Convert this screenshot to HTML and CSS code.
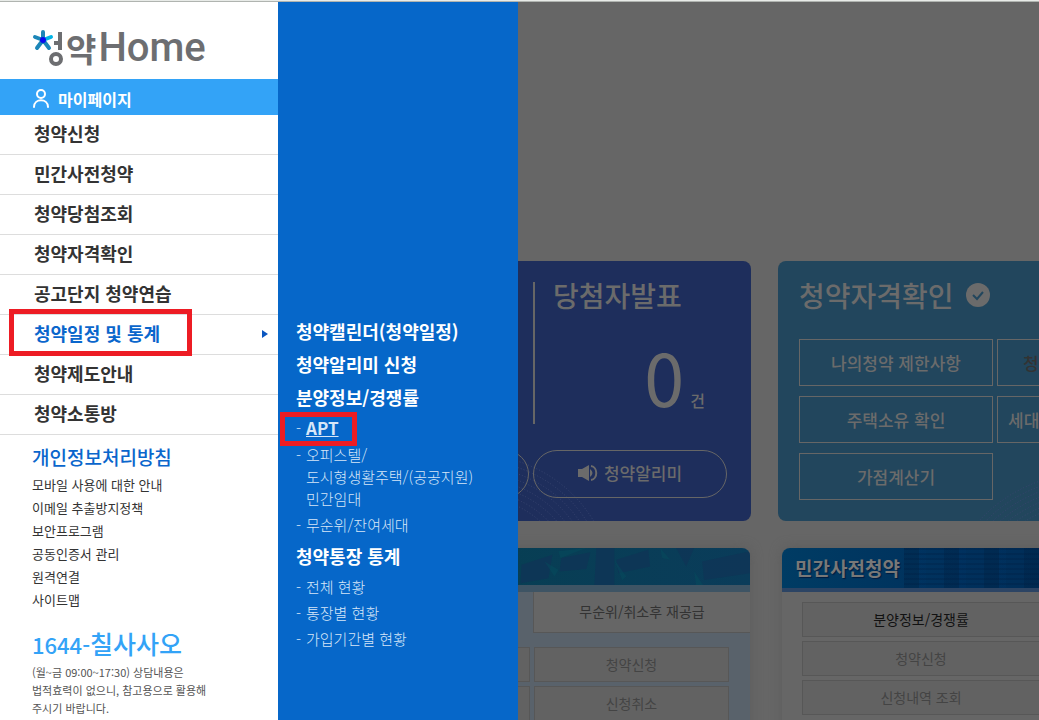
FILE: index.html
```html
<!DOCTYPE html>
<html lang="ko">
<head>
<meta charset="utf-8">
<title>청약Home</title>
<link rel="stylesheet" href="styles.css">
</head>
<body>
<div class="layout">
  <aside class="sidebar">
    <a class="logo" href="#" aria-label="청약Home">
      <svg class="logo-mark" viewBox="0 0 32 38" width="32" height="38" aria-hidden="true">
        <g class="mark-arms">
          <path d="M11 11V3M11 11L3 8M11 11L5 19M11 11L17 19"/>
          <path class="arm-light" d="M11 11L19 8"/>
        </g>
        <circle class="mark-core" cx="11" cy="11" r="3"/>
        <g class="mark-base"><path d="M28 3V21M22 14H28"/><circle cx="24" cy="30" r="5"/></g>
      </svg>
      <span class="logo-ko">약</span><span class="logo-en">Home</span>
    </a>
    <a class="mypage" href="#">
      <svg viewBox="0 0 18 20" width="18" height="20" aria-hidden="true"><circle cx="9" cy="6" r="4"/><path d="M2 19C2 10 16 10 16 19"/></svg>
      <span>마이페이지</span>
    </a>
    <nav>
      <ul class="menu">
        <li><a href="#">청약신청</a></li>
        <li><a href="#">민간사전청약</a></li>
        <li><a href="#">청약당첨조회</a></li>
        <li><a href="#">청약자격확인</a></li>
        <li><a href="#">공고단지 청약연습</a></li>
        <li class="active"><a href="#">청약일정 및 통계</a><span class="mark mark-menu"></span></li>
        <li><a href="#">청약제도안내</a></li>
        <li><a href="#">청약소통방</a></li>
      </ul>
    </nav>
    <div class="info">
      <h2><a href="#">개인정보처리방침</a></h2>
      <ul class="links">
        <li><a href="#">모바일 사용에 대한 안내</a></li>
        <li><a href="#">이메일 추출방지정책</a></li>
        <li><a href="#">보안프로그램</a></li>
        <li><a href="#">공동인증서 관리</a></li>
        <li><a href="#">원격연결</a></li>
        <li><a href="#">사이트맵</a></li>
      </ul>
      <p class="phone">1644-<strong>칠사사오</strong></p>
      <p class="notice">(월~금 09:00~17:30) 상담내용은<br>법적효력이 없으니, 참고용으로 활용해<br>주시기 바랍니다.</p>
    </div>
  </aside>

  <nav class="submenu">
    <h3><a href="#">청약캘린더(청약일정)</a></h3>
    <h3><a href="#">청약알리미 신청</a></h3>
    <h3><a href="#">분양정보/경쟁률</a></h3>
    <ul>
      <li class="current"><a href="#">APT</a><span class="mark mark-apt"></span></li>
      <li><a href="#">오피스텔/<br>도시형생활주택/(공공지원)<br>민간임대</a></li>
      <li><a href="#">무순위/잔여세대</a></li>
    </ul>
    <h3><a href="#">청약통장 통계</a></h3>
    <ul>
      <li><a href="#">전체 현황</a></li>
      <li><a href="#">통장별 현황</a></li>
      <li><a href="#">가입기간별 현황</a></li>
    </ul>
  </nav>

  <main class="page">
    <div class="row row-top">
      <section class="card card-navy">
        <svg class="waves" viewBox="0 0 434 260" aria-hidden="true">
          <circle cx="160" cy="330" r="136"/><circle cx="160" cy="330" r="130"/><circle cx="160" cy="330" r="124"/><circle cx="160" cy="330" r="118"/><circle cx="160" cy="330" r="112"/><circle cx="160" cy="330" r="106"/><circle cx="160" cy="330" r="100"/><circle cx="160" cy="330" r="94"/>
        </svg>
        <div class="result">
          <h2>당첨자발표</h2>
          <p class="count"><b>0</b><span>건</span></p>
        </div>
        <div class="pills">
          <button type="button" class="pill" aria-label="청약캘린더"></button>
          <button type="button" class="pill">
            <svg viewBox="0 0 20 16" width="20" height="16" aria-hidden="true"><path class="solid" d="M0 4H4L11 0V16L4 12H0Z"/><path class="solid" d="M12 4Q17 8 12 12Z"/><path class="wave" d="M13 1C20 2 20 14 13 15"/></svg>
            청약알리미
          </button>
        </div>
      </section>
      <section class="card card-teal">
        <svg class="waves" viewBox="0 0 434 260" aria-hidden="true">
          <circle cx="310" cy="360" r="148"/><circle cx="310" cy="360" r="143"/><circle cx="310" cy="360" r="138"/><circle cx="310" cy="360" r="133"/><circle cx="310" cy="360" r="128"/><circle cx="310" cy="360" r="123"/><circle cx="310" cy="360" r="118"/>
        </svg>
        <h2>청약자격확인
          <svg viewBox="0 0 24 24" width="24" height="24" aria-hidden="true"><circle cx="12" cy="12" r="12"/><path d="M7 12L11 16L17 9"/></svg>
        </h2>
        <div class="checks">
          <button type="button">나의청약 제한사항</button>
          <button type="button" class="dark">청약제한사항 확인</button>
          <button type="button">주택소유 확인</button>
          <button type="button" class="long">세대구성원 등록/조회</button>
          <button type="button">가점계산기</button>
        </div>
      </section>
    </div>

    <div class="row row-bottom">
      <section class="panel panel-apply">
        <header>
          <svg viewBox="0 0 434 44" preserveAspectRatio="none" aria-hidden="true">
            <path class="tower" d="M245 12L274 5L270 25L243 28ZM300 14L332 2L334 22L302 30ZM280 0H298V44H278ZM360 0H378L370 22ZM386 16L434 4V30L388 38ZM205 20L236 8L232 36L204 42Z"/>
            <path class="beam" d="M228 16L242 26L238 34ZM344 0L354 14L346 12ZM298 14L310 34L306 38ZM378 28L387 44H380ZM242 4L270 0L244 12Z"/>
          </svg>
        </header>
        <div class="tabs"><button type="button">무순위/취소후 재공급</button></div>
        <div class="cells">
          <button type="button" aria-label="분양정보"></button>
          <button type="button">청약신청</button>
          <button type="button" aria-label="청약조회"></button>
          <button type="button">신청취소</button>
        </div>
      </section>
      <section class="panel panel-private">
        <header>
          <div class="skyline"></div>
          <h2>민간사전청약</h2>
        </header>
        <div class="cells">
          <button type="button" class="strong">분양정보/경쟁률</button>
          <button type="button">청약신청</button>
          <button type="button">신청내역 조회</button>
        </div>
      </section>
    </div>
  </main>
</div>
</body>
</html>
```

FILE: styles.css
```css
* { box-sizing: border-box; }

body {
  margin: 0;
  font-family: "Noto Sans CJK KR", sans-serif;
  color: #333;
  background: #e8ebe8;
}

h2, h3, p, ul { margin: 0; padding: 0; }
ul { list-style: none; }
a { color: inherit; text-decoration: none; }
button { font-family: inherit; margin: 0; padding: 0; white-space: nowrap; }

.layout {
  display: grid;
  grid-template-columns: 278px 240px minmax(0, 1fr);
  height: 100vh;
  overflow: hidden;
  border-top: 1px solid #e8ebe8;
  box-shadow: inset 0 1px #b0b4b0;
  padding-top: 1px;
}

/* sidebar */
.sidebar { background: #fff; }

.logo {
  display: flex;
  align-items: center;
  gap: 2px;
  height: 77px;
  padding: 14px 0 0 32px;
  color: #6d6e71;
  line-height: 40px;
}
.logo-ko { font-size: 33px; font-weight: 700; }
.logo-en { font-family: Roboto, sans-serif; font-size: 40px; font-weight: 500; }
.mark-arms, .mark-base { fill: none; stroke: #1c86b8; stroke-width: 4; stroke-linecap: round; }
.mark-base { stroke: #6d6e71; stroke-linecap: butt; }
.arm-light { stroke: #00b4e6; }
.mark-core { fill: #0a0af0; }

.mypage {
  display: flex;
  align-items: center;
  gap: 8px;
  height: 36px;
  padding: 4px 0 0 32px;
  background: #33a3f7;
  color: #fff;
  font-size: 16px;
  font-weight: 700;
  line-height: 24px;
}
.mypage svg { fill: none; stroke: #fff; stroke-width: 2; stroke-linecap: round; margin-bottom: 2px; }

.menu li {
  position: relative;
  height: 40px;
  padding-left: 34px;
  border-bottom: 1px solid #ddd;
  font-size: 18px;
  font-weight: 700;
  line-height: 36px;
}
.menu .active { color: #0a66cc; }
.menu .active::after {
  content: "";
  position: absolute;
  right: 10px;
  top: 15px;
  border: 4px solid transparent;
  border-left: 6px solid #0a56c0;
  border-right: 0;
}

.mark { position: absolute; border: 5px solid #ed1c24; }
.mark-menu { left: 9px; top: -6px; width: 183px; height: 47px; z-index: 1; }
.mark-apt { left: -16px; top: -5px; width: 77px; height: 34px; }

.info { padding: 8px 0 0 32px; }
.info h2 { font-size: 19px; font-weight: 500; line-height: 28px; color: #0a66cc; padding-bottom: 2px; }
.links { font-size: 13px; line-height: 23px; }
.phone { padding-top: 15px; font-size: 22px; line-height: 36px; font-weight: 500; color: #33a3f7; }
.phone strong { font-size: 25px; font-weight: 500; line-height: 32px; }
.notice { padding-top: 1px; font-size: 11px; line-height: 18px; color: #555; white-space: nowrap; }

/* submenu */
.submenu {
  padding: 313px 0 0 18px;
  background: #0667c9;
  color: #fff;
}
.submenu h3 { font-size: 18px; font-weight: 700; line-height: 33px; }
.submenu ul {
  display: grid;
  gap: 4px;
  padding: 3px 0 4px;
  font-size: 15px;
  font-weight: 300;
  line-height: 22px;
  color: #d6e6f8;
}
.submenu li { position: relative; padding-left: 10px; }
.submenu li::before { content: "-"; position: absolute; left: 0; }
.submenu .current a { font-size: 17px; font-weight: 700; text-decoration: underline; }

/* dimmed page */
.page { overflow: hidden; padding-top: 259px; background: #666; color: #757575; }
.row { display: flex; margin-left: -201px; }
.row-top { gap: 27px; }
.row-bottom { gap: 32px; margin-top: 27px; }

.card {
  position: relative;
  flex: 0 0 434px;
  height: 260px;
  border-radius: 8px;
  overflow: hidden;
  color: #6b6b6b;
}
.card-navy { background: #1e2e5c; }
.card-teal { background: #22465d; padding: 14px 21px; }
.card h2 { font-size: 28px; font-weight: 500; line-height: 40px; }
.waves { position: absolute; left: 0; top: 0; width: 434px; height: 260px; fill: none; stroke: #3a4670; stroke-width: 1; stroke-dasharray: 1 2; }

.result {
  height: 142px;
  margin: 21px 0 0 216px;
  padding-left: 18px;
  border-left: 2px solid #666;
}
.card .result h2 { line-height: 26px; }
.count { display: flex; align-items: baseline; justify-content: flex-end; gap: 6px; padding-right: 46px; }
.count b { font-size: 72px; font-weight: 400; line-height: 136px; }
.count span { font-size: 16px; font-weight: 500; }

.pills { position: relative; display: grid; grid-template-columns: 194px 194px; gap: 4px; margin: 26px 0 0 18px; }
.pill {
  display: flex;
  align-items: center;
  justify-content: center;
  gap: 6px;
  height: 48px;
  padding-bottom: 3px;
  border: 1px solid #666;
  border-radius: 24px;
  background: transparent;
  color: #6b6b6b;
  font-size: 17px;
  font-weight: 500;
}
.pill .solid { fill: #6b6b6b; }
.pill .wave { fill: none; stroke: #6b6b6b; stroke-width: 2; }

.card-teal h2 { display: flex; align-items: center; gap: 12px; }
.card-teal h2 circle { fill: #6b6b6b; }
.card-teal h2 path { fill: none; stroke: #22465d; stroke-width: 2; }
.checks { position: relative; display: grid; grid-template-columns: 194px 194px; gap: 10px 4px; padding-top: 24px; }
.checks button {
  height: 47px;
  border: 1px solid #666;
  background: transparent;
  color: #6b6b6b;
  font-size: 17px;
  font-weight: 500;
}
.checks .dark { padding-left: 25px; text-align: left; color: #333; }
.checks .long { padding-left: 10px; text-align: left; }

.panel {
  flex: 0 0 433px;
  height: 200px;
  border-radius: 8px 8px 0 0;
  box-shadow: 0 0 12px #5c5c5c;
  overflow: hidden;
}
.panel header { position: relative; height: 44px; }
.panel button {
  padding-bottom: 2px;
  border: 1px solid #575757;
  background: #626262;
  color: #444;
  font-size: 14px;
}
.panel-apply { background: #59626b; }
.panel-apply header { background: linear-gradient(90deg, #05404f, #0a3c5a); border-bottom: 7px solid #3e5464; }
.panel-apply header svg { display: block; width: 100%; height: 100%; }
.tower { fill: #0f3556; opacity: .8; }
.beam { fill: #04505f; opacity: .4; }
.tabs { display: grid; padding-left: 216px; }
.tabs button { height: 41px; border-width: 0 0 1px 1px; background: #666; color: #333; }
.panel-apply .cells { display: grid; grid-template-columns: 195px 195px; gap: 4px; padding: 14px 0 0 18px; }
.panel-apply .cells button { height: 35px; }

.panel-private { background: #666; }
.panel-private header { background: linear-gradient(90deg, #003c64, #00305c 40%, #00284f); border-bottom: 4px solid #2c4464; }
.skyline {
  position: absolute;
  left: 122px;
  right: 0;
  top: 0;
  height: 40px;
  background:
    repeating-linear-gradient(0deg, transparent 0 3px, #001c4044 3px 5px),
    repeating-linear-gradient(90deg, #00204055 0 15px, #00346644 15px 22px, transparent 22px 40px);
}
.panel-private h2 { position: relative; padding-left: 13px; font-size: 19px; font-weight: 700; line-height: 40px; color: #787878; text-shadow: 1px 1px 1px #001c40; }
.panel-private .cells { display: grid; grid-template-columns: 238px; gap: 4px; padding: 10px 0 0 20px; }
.panel-private .cells button { height: 35px; }
.panel-private .strong { color: #111; }
```
